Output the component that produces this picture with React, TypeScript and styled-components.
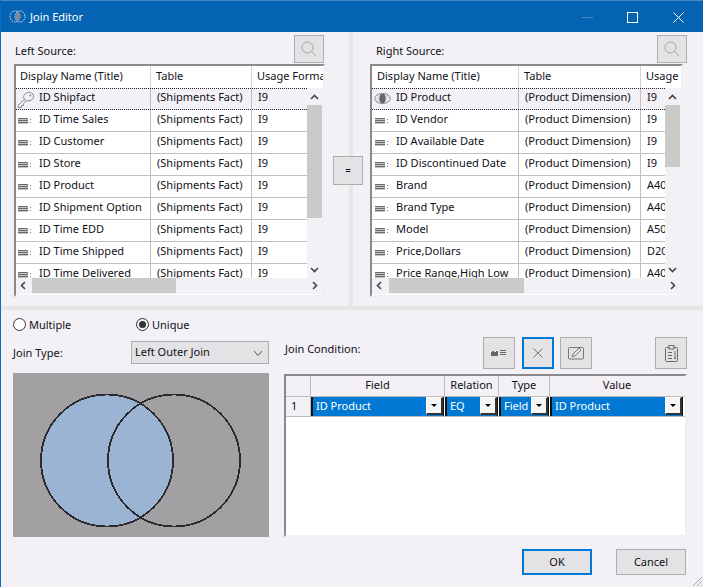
import React from "react";
import styled, { createGlobalStyle, css } from "styled-components";

const Global = createGlobalStyle`
  html, body { margin: 0; padding: 0; background: #f3f1f5; }
  * { box-sizing: border-box; }
`;

const FONT = `"Noto Sans", "Open Sans", "Liberation Sans", sans-serif`;

const Dialog = styled.div`
  position: relative;
  width: 703px;
  height: 587px;
  overflow: hidden;
  background: #f3f1f5;
  border-left: 1px solid #0a6cc0;
  font: 11px/16px ${FONT};
  color: #101018;
`;

const TitleBar = styled.div`
  position: absolute;
  left: -1px;
  top: 0;
  width: 703px;
  height: 32px;
  background: #0563b4;
  border-top: 1px solid #4a86bd;
  color: #fff;
  display: flex;
  align-items: center;
  padding-left: 9px;
  gap: 4px;
`;

const TitleText = styled.span`
  font-size: 11px;
`;

const WinButton = styled.svg<{ $x: number }>`
  position: absolute;
  left: ${(p) => p.$x}px;
  top: 11px;
  width: 11px;
  height: 11px;
`;

const VSplit = styled.div`
  position: absolute;
  left: 348px;
  top: 32px;
  width: 4px;
  height: 274px;
  background: #e4e6e3;
`;

const HSplit = styled.div`
  position: absolute;
  left: 0;
  top: 306px;
  width: 703px;
  height: 4px;
  background: #e4e6e3;
`;

const Caption = styled.label<{ $x: number; $y: number }>`
  position: absolute;
  left: ${(p) => p.$x - 1}px;
  top: ${(p) => p.$y}px;
  white-space: nowrap;
`;

const IconButton = styled.button<{ $x: number; $y: number; $w: number; $h: number; $focus?: boolean }>`
  position: absolute;
  left: ${(p) => p.$x - 1}px;
  top: ${(p) => p.$y}px;
  width: ${(p) => p.$w}px;
  height: ${(p) => p.$h}px;
  padding: 0;
  background: #e3e2e4;
  border: 1px solid #adadad;
  display: flex;
  align-items: center;
  justify-content: center;
  font: 11px/16px ${FONT};
  color: #101018;
  ${(p) =>
    p.$focus &&
    css`
      border: 2px solid #0078d7;
    `}
`;

const EqualSign = styled.span`
  font-size: 9px;
  font-weight: 700;
`;

const ListPanel = styled.div<{ $x: number; $w: number }>`
  position: absolute;
  left: ${(p) => p.$x - 1}px;
  top: 64px;
  width: ${(p) => p.$w}px;
  height: 233px;
  overflow: hidden;
  background: #fff;
  border-style: solid;
  border-width: 2px;
  border-color: #8a8a8c #f0f0f2 #f0f0f2 #8a8a8c;
`;

const HeadRow = styled.div<{ $cols: string; $pad: number }>`
  display: grid;
  grid-template-columns: ${(p) => p.$cols};
  height: 22px;
  background: #fff;
  & > :first-child { padding-left: ${(p) => p.$pad}px; }
`;

const HeadCell = styled.div`
  padding: 2px 0 0 5px;
  border-right: 1px solid #d4d4d6;
  white-space: nowrap;
  overflow: hidden;
  &:last-child { border-right: 0; }
`;

const RowsClip = styled.div`
  position: absolute;
  left: 0;
  top: 22px;
  right: 16px;
  height: 190px;
  overflow: hidden;
`;

const Row = styled.div<{ $cols: string; $current?: boolean }>`
  position: relative;
  display: grid;
  grid-template-columns: ${(p) => p.$cols};
  height: 22px;
  border-bottom: 1px solid #c0c0c2;
  background: ${(p) => (p.$current ? "#f3f1f5" : "#fff")};
  ${(p) =>
    p.$current &&
    css`
      border-top: 1px dotted #222;
      border-bottom: 1px dotted #222;
    `}
`;

const Cell = styled.div<{ $current?: boolean }>`
  display: flex;
  align-items: flex-start;
  padding: ${(p) => (p.$current ? "0" : "1px")} 0 0 6px;
  border-right: 1px solid #c0c0c2;
  white-space: nowrap;
  overflow: hidden;
  &:last-child { border-right: 0; }
`;

const NameCell = styled(Cell)<{ $gutter: number }>`
  padding-left: ${(p) => p.$gutter}px;
  gap: 0;
`;

const IconSlot = styled.span`
  flex: 0 0 21px;
  height: 20px;
  display: flex;
  align-items: flex-start;
`;

const ScrollTrack = styled.div<{ $vertical?: boolean }>`
  position: absolute;
  background: #f3f1f5;
  ${(p) =>
    p.$vertical
      ? css`
          right: 0;
          top: 22px;
          width: 16px;
          height: 190px;
        `
      : css`
          left: 0;
          right: 0;
          bottom: 1px;
          height: 16px;
        `}
`;

const Thumb = styled.div<{ $vertical?: boolean; $start: number; $len: number }>`
  position: absolute;
  background: #c9cbc9;
  ${(p) =>
    p.$vertical
      ? css`
          left: 0;
          top: ${p.$start}px;
          width: 15px;
          height: ${p.$len}px;
        `
      : css`
          top: 0;
          left: ${p.$start}px;
          height: 15px;
          width: ${p.$len}px;
        `}
`;

const Chevron = styled.svg<{ $x: number; $y: number }>`
  position: absolute;
  left: ${(p) => p.$x}px;
  top: ${(p) => p.$y}px;
  width: 9px;
  height: 9px;
`;

const Radio = styled.span<{ $x: number; $checked?: boolean }>`
  position: absolute;
  left: ${(p) => p.$x - 1}px;
  top: 318px;
  width: 13px;
  height: 13px;
  border-radius: 50%;
  border: 1px solid #333;
  background: #fff;
  ${(p) =>
    p.$checked &&
    css`
      background: #f3f1f5;
      &::after {
        content: "";
        position: absolute;
        left: 2px;
        top: 2px;
        width: 7px;
        height: 7px;
        border-radius: 50%;
        background: #333;
      }
    `}
`;

const SelectBox = styled.div`
  position: absolute;
  left: 130px;
  top: 341px;
  width: 138px;
  height: 23px;
  background: #e3e2e4;
  border: 1px solid #adadad;
  padding: 2px 0 0 3px;
  display: flex;
  justify-content: space-between;
`;

const SelectArrow = styled.svg`
  width: 10px;
  height: 7px;
  margin: 6px 5px 0 0;
`;

const Venn = styled.svg`
  position: absolute;
  left: 12px;
  top: 373px;
  width: 256px;
  height: 164px;
`;

const Grid = styled.div`
  position: absolute;
  left: 283px;
  top: 374px;
  width: 403px;
  height: 163px;
  background: #fff;
  border-style: solid;
  border-width: 2px;
  border-color: #8a8a8c #f0f0f2 #f0f0f2 #8a8a8c;
`;

const GRID_COLS = "25px 134px 54px 51px 134px";

const GridHead = styled.div`
  display: grid;
  grid-template-columns: ${GRID_COLS};
  height: 21px;
  background: #f3f1f5;
  border-bottom: 1px solid #bdbdbf;
`;

const GridHeadCell = styled.div`
  text-align: center;
  padding-top: 1px;
  border-right: 1px solid #bdbdbf;
  overflow: hidden;
  &:last-child { border-right: 0; }
`;

const GridRow = styled.div`
  display: grid;
  grid-template-columns: ${GRID_COLS};
  height: 20px;
  border-bottom: 1px solid #bdbdbf;
`;

const RowNumber = styled.div`
  background: #f3f1f5;
  padding: 1px 0 0 5px;
  border-right: 1px solid #bdbdbf;
`;

const EditCell = styled.div`
  display: flex;
  justify-content: space-between;
  height: 19px;
  margin-right: 1px;
  padding: 1px 0 0 3px;
  background: #0078d4;
  color: #fff;
  border-left: 2px solid #111;
  border-right: 1px solid #111;
  overflow: hidden;
  white-space: nowrap;
`;

const DropButton = styled.span`
  flex: 0 0 17px;
  height: 18px;
  margin-top: -1px;
  background: #f5f5f5;
  border-style: solid;
  border-width: 1px 2px 2px 1px;
  border-color: #fff #333 #333 #fff;
  display: flex;
  align-items: center;
  justify-content: center;
  &::after {
    content: "";
    border-style: solid;
    border-width: 3px 3px 0 3px;
    border-color: #000 transparent transparent transparent;
  }
`;

const Grip = styled.svg`
  position: absolute;
  right: 0;
  bottom: 0;
  width: 13px;
  height: 13px;
`;

const RowIcon = styled.svg<{ $top: number; $left?: number }>`
  margin-top: ${(p) => p.$top}px;
  margin-left: ${(p) => p.$left ?? 0}px;
  flex: none;
`;

const ListIcon = () => (
  <RowIcon $top={6} width="14" height="8" viewBox="0 0 14 8" shapeRendering="crispEdges">
    <path d="M0 1.5h10M0 3.5h10M0 5.5h10" stroke="#6b6b6d" strokeWidth="1" fill="none" />
    <path d="M0 2.5h10M0 4.5h10M0 6.5h10" stroke="#c2c2c4" strokeWidth="1" fill="none" />
    <path d="M12.5 2v1M12.5 5v1" stroke="#7a7a7c" strokeWidth="1" />
  </RowIcon>
);

const KeyIcon = () => (
  <RowIcon $top={2} $left={-1} width="18" height="17" viewBox="0 0 18 17" fill="none" stroke="#8e8e90" strokeWidth="1">
    <ellipse cx="11.6" cy="5.6" rx="5" ry="4.2" transform="rotate(-20 11.6 5.6)" />
    <path d="M7.8 8 L1 14.5 V16.5 H4.5 V14.5 H6.5 V12.5 L9.8 9.6" />
    <circle cx="13.3" cy="4.4" r="0.8" />
  </RowIcon>
);

const JoinedIcon = () => (
  <RowIcon $top={3} $left={-1} width="17" height="13" viewBox="0 0 17 13" fill="none">
    <ellipse cx="8.5" cy="6.5" rx="7.8" ry="5" fill="#e4e4e6" stroke="#8a8a8c" />
    <ellipse cx="8.5" cy="6.5" rx="3.2" ry="4.8" fill="#666668" />
  </RowIcon>
);

const SearchIcon = () => (
  <svg width="18" height="18" viewBox="0 0 18 18" fill="none" stroke="#a3a3a5" strokeWidth="1">
    <circle cx="7.5" cy="7.5" r="5.5" />
    <path d="M11.5 11.5 L16 16" />
  </svg>
);

type Col = [string, string, string];

const leftRows: Col[] = [
  ["ID Shipfact", "(Shipments Fact)", "I9"],
  ["ID Time Sales", "(Shipments Fact)", "I9"],
  ["ID Customer", "(Shipments Fact)", "I9"],
  ["ID Store", "(Shipments Fact)", "I9"],
  ["ID Product", "(Shipments Fact)", "I9"],
  ["ID Shipment Option", "(Shipments Fact)", "I9"],
  ["ID Time EDD", "(Shipments Fact)", "I9"],
  ["ID Time Shipped", "(Shipments Fact)", "I9"],
  ["ID Time Delivered", "(Shipments Fact)", "I9"],
];

const rightRows: Col[] = [
  ["ID Product", "(Product Dimension)", "I9"],
  ["ID Vendor", "(Product Dimension)", "I9"],
  ["ID Available Date", "(Product Dimension)", "I9"],
  ["ID Discontinued Date", "(Product Dimension)", "I9"],
  ["Brand", "(Product Dimension)", "A40"],
  ["Brand Type", "(Product Dimension)", "A40"],
  ["Model", "(Product Dimension)", "A50"],
  ["Price,Dollars", "(Product Dimension)", "D20"],
  ["Price Range,High Low", "(Product Dimension)", "A40"],
];

type ListProps = {
  x: number;
  w: number;
  cols: string;
  headCols: string;
  headPad: number;
  gutter: number;
  head: Col;
  rows: Col[];
  first: React.ReactNode;
  vThumb: [number, number];
  hThumb: [number, number];
};

const SourceList = ({ x, w, cols, headCols, headPad, gutter, head, rows, first, vThumb, hThumb }: ListProps) => (
  <ListPanel $x={x} $w={w}>
    <HeadRow $cols={headCols} $pad={headPad}>
      {head.map((h) => (
        <HeadCell key={h}>{h}</HeadCell>
      ))}
    </HeadRow>
    <RowsClip>
      {rows.map((r, i) => (
        <Row key={r[0]} $cols={cols} $current={i === 0}>
          <NameCell $current={i === 0} $gutter={gutter}>
            <IconSlot>{i === 0 ? first : <ListIcon />}</IconSlot>
            {r[0]}
          </NameCell>
          <Cell $current={i === 0}>{r[1]}</Cell>
          <Cell $current={i === 0}>{r[2]}</Cell>
        </Row>
      ))}
    </RowsClip>
    <ScrollTrack $vertical>
      <Thumb $vertical $start={vThumb[0]} $len={vThumb[1]} />
      <Chevron $x={3} $y={5} viewBox="0 0 9 9">
        <path d="M1 6 L4.5 2.5 L8 6" fill="none" stroke="#444" strokeWidth="1.6" />
      </Chevron>
      <Chevron $x={3} $y={177} viewBox="0 0 9 9">
        <path d="M1 3 L4.5 6.5 L8 3" fill="none" stroke="#444" strokeWidth="1.6" />
      </Chevron>
    </ScrollTrack>
    <ScrollTrack>
      <Thumb $start={hThumb[0]} $len={hThumb[1]} />
      <Chevron $x={3} $y={3} viewBox="0 0 9 9">
        <path d="M6 1 L2.5 4.5 L6 8" fill="none" stroke="#444" strokeWidth="1.6" />
      </Chevron>
      <Chevron $x={w - 17} $y={3} viewBox="0 0 9 9">
        <path d="M3 1 L6.5 4.5 L3 8" fill="none" stroke="#444" strokeWidth="1.6" />
      </Chevron>
    </ScrollTrack>
  </ListPanel>
);

export default function App() {
  return (
    <Dialog>
      <Global />
      <TitleBar>
        <svg width="17" height="13" viewBox="0 0 17 13" fill="none">
          <ellipse cx="6" cy="6.5" rx="5" ry="5.5" stroke="#e6eaf0" strokeDasharray="1.5 1" />
          <ellipse cx="11" cy="6.5" rx="5" ry="5.5" stroke="#e6eaf0" strokeDasharray="1.5 1" />
          <ellipse cx="8.5" cy="6.5" rx="2.2" ry="4.2" fill="#7f8a94" />
        </svg>
        <TitleText>Join Editor</TitleText>
        <WinButton $x={582} viewBox="0 0 11 11" shapeRendering="crispEdges">
          <path d="M0 5.5h11" stroke="#4a8cc6" />
        </WinButton>
        <WinButton $x={627} viewBox="0 0 11 11" shapeRendering="crispEdges">
          <rect x="0.5" y="0.5" width="9.5" height="9.5" fill="none" stroke="#fff" />
        </WinButton>
        <WinButton $x={673} viewBox="0 0 11 11">
          <path d="M0.5 0.5 L10.5 10.5 M10.5 0.5 L0.5 10.5" fill="none" stroke="#fff" />
        </WinButton>
      </TitleBar>

      <VSplit />
      <HSplit />

      <Caption $x={15} $y={43}>Left Source:</Caption>
      <IconButton $x={294} $y={35} $w={30} $h={28}><SearchIcon /></IconButton>
      <SourceList
        x={14}
        w={311}
        headCols="135px 101px 73px"
        cols="135px 101px 57px"
        headPad={4}
        gutter={2}
        head={["Display Name (Title)", "Table", "Usage Format"]}
        rows={leftRows}
        first={<KeyIcon />}
        vThumb={[17, 113]}
        hThumb={[16, 144]}
      />

      <IconButton $x={333} $y={156} $w={30} $h={29}><EqualSign>=</EqualSign></IconButton>

      <Caption $x={376} $y={43}>Right Source:</Caption>
      <IconButton $x={657} $y={35} $w={30} $h={28}><SearchIcon /></IconButton>
      <SourceList
        x={370}
        w={313}
        headCols="147px 122px 40px"
        cols="147px 122px 24px"
        headPad={5}
        gutter={3}
        head={["Display Name (Title)", "Table", "Usage Format"]}
        rows={rightRows}
        first={<JoinedIcon />}
        vThumb={[17, 62]}
        hThumb={[17, 135]}
      />

      <Radio $x={13} />
      <Caption $x={29} $y={317}>Multiple</Caption>
      <Radio $x={136} $checked />
      <Caption $x={152} $y={317}>Unique</Caption>

      <Caption $x={13} $y={345}>Join Type:</Caption>
      <SelectBox>
        Left Outer Join
        <SelectArrow viewBox="0 0 10 7">
          <path d="M1 1 L5 5.5 L9 1" fill="none" stroke="#555" strokeWidth="1" />
        </SelectArrow>
      </SelectBox>

      <Venn viewBox="0 0 256 164">
        <rect width="256" height="164" fill="#a3a0a3" />
        <circle cx="94" cy="87.5" r="66" fill="#9bb4d3" stroke="#2b2a2e" strokeWidth="1.8" shapeRendering="crispEdges" />
        <circle cx="161" cy="87.5" r="66" fill="none" stroke="#2b2a2e" strokeWidth="1.8" shapeRendering="crispEdges" />
      </Venn>

      <Caption $x={285} $y={341}>Join Condition:</Caption>
      <IconButton $x={483} $y={337} $w={32} $h={32}>
        <svg width="16" height="8" viewBox="0 0 16 8" shapeRendering="crispEdges">
          <path d="M0 7V3l2-1 2 1 2-1 1 1v4z" fill="#666" />
          <path d="M9 1.5h6M9 3.5h6M9 5.5h6" stroke="#666" strokeWidth="1" />
        </svg>
      </IconButton>
      <IconButton $x={522} $y={337} $w={32} $h={32} $focus>
        <svg width="10" height="10" viewBox="0 0 10 10">
          <path d="M0.5 0.5 L9.5 9.5 M9.5 0.5 L0.5 9.5" stroke="#777" fill="none" />
        </svg>
      </IconButton>
      <IconButton $x={560} $y={337} $w={32} $h={32}>
        <svg width="17" height="14" viewBox="0 0 17 14" fill="none" stroke="#777">
          <rect x="0.5" y="1.5" width="15" height="11.5" rx="1" />
          <path d="M4 10.5 L5 8 L11 2 L13 4 L7 10 Z" fill="#e3e2e4" />
        </svg>
      </IconButton>
      <IconButton $x={655} $y={337} $w={32} $h={32}>
        <svg width="13" height="17" viewBox="0 0 13 17" fill="none" stroke="#666">
          <rect x="0.5" y="2.5" width="12" height="14" rx="1" />
          <rect x="4" y="0.5" width="5" height="3.5" fill="#e3e2e4" />
          <path d="M3 7.5h4M3 10.5h4M3 13.5h4M10 6v8M9 13l1 1 1-1" />
        </svg>
      </IconButton>

      <Grid>
        <GridHead>
          <GridHeadCell />
          <GridHeadCell>Field</GridHeadCell>
          <GridHeadCell>Relation</GridHeadCell>
          <GridHeadCell>Type</GridHeadCell>
          <GridHeadCell>Value</GridHeadCell>
        </GridHead>
        <GridRow>
          <RowNumber>1</RowNumber>
          <EditCell>ID Product<DropButton /></EditCell>
          <EditCell>EQ<DropButton /></EditCell>
          <EditCell>Field<DropButton /></EditCell>
          <EditCell>ID Product<DropButton /></EditCell>
        </GridRow>
      </Grid>

      <IconButton $x={522} $y={549} $w={70} $h={26} $focus>OK</IconButton>
      <IconButton $x={616} $y={549} $w={70} $h={26}>Cancel</IconButton>

      <Grip viewBox="0 0 13 13">
        <path d="M12 3 L3 12 M12 7 L7 12 M12 11 L11 12" stroke="#a8a8aa" fill="none" />
      </Grip>
    </Dialog>
  );
}
